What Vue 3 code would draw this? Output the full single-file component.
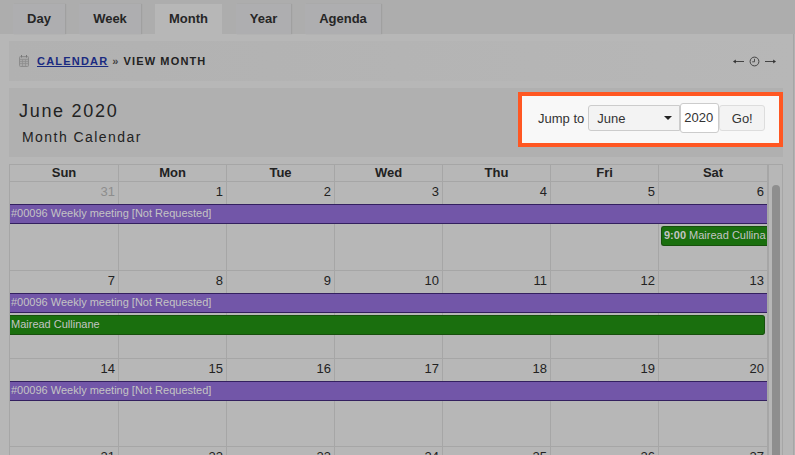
<script setup>
const tabs = [
  { label: 'Day', w: 52 },
  { label: 'Week', w: 62 },
  { label: 'Month', w: 67, active: true },
  { label: 'Year', w: 55 },
  { label: 'Agenda', w: 76 },
]
const heads = ['Sun', 'Mon', 'Tue', 'Wed', 'Thu', 'Fri', 'Sat']
const meeting = '#00096 Weekly meeting [Not Requested]'
const weeks = [
  { h: 89, days: [31, 1, 2, 3, 4, 5, 6], muted: 31, person: 'single' },
  { h: 88, days: [7, 8, 9, 10, 11, 12, 13], person: 'wide' },
  { h: 88, days: [14, 15, 16, 17, 18, 19, 20] },
  { h: 88, days: [21, 22, 23, 24, 25, 26, 27] },
]
</script>

<template>
  <div class="page">
    <nav class="tabs">
      <div
        v-for="t in tabs"
        :key="t.label"
        class="tab"
        :class="{ active: t.active }"
        :style="{ width: t.w + 'px' }"
      >{{ t.label }}</div>
    </nav>

    <div class="content">
      <section class="crumbs">
        <svg class="cal-icon" width="10" height="12" viewBox="0 0 10 12">
          <rect x="0.5" y="1.5" width="9" height="10" rx="1" fill="#a8a8a8" stroke="#8c8c8c" />
          <path d="M0.5 4.5H9.5M0.5 6.5H9.5M0.5 8.5H9.5M3.5 4.5V11.5M6.5 4.5V11.5" stroke="#8c8c8c" stroke-width="0.7" fill="none" />
          <path d="M2.5 0V2.5M7.5 0V2.5" stroke="#777" fill="none" />
        </svg>
        <a class="crumb-link">CALENDAR</a>
        <span class="crumb-sep">»</span>
        <span class="crumb-text">VIEW MONTH</span>
        <span class="pager">
          <svg width="11" height="7" viewBox="0 0 11 7">
            <path d="M2 3.5H11" fill="none" stroke="#444" stroke-width="1" />
            <path d="M0 3.5L2.8 1.5V5.5Z" fill="#333" />
          </svg>
          <svg width="11" height="11" viewBox="0 0 11 11">
            <circle cx="5.5" cy="5.5" r="4.4" fill="none" stroke="#444" stroke-width="1" />
            <path d="M5.5 2.8V5.8H3.2" fill="none" stroke="#444" stroke-width="0.9" />
          </svg>
          <svg width="11" height="7" viewBox="0 0 11 7">
            <path d="M0 3.5H9" fill="none" stroke="#444" stroke-width="1" />
            <path d="M11 3.5L8.2 1.5V5.5Z" fill="#333" />
          </svg>
        </span>
      </section>

      <section class="head">
        <div class="titles">
          <h1>June 2020</h1>
          <h2>Month Calendar</h2>
        </div>
        <form class="jump" @submit.prevent>
          <span class="jump-label">Jump to</span>
          <div class="select">
            <span>June</span>
            <i class="caret"></i>
          </div>
          <div class="year">2020</div>
          <button class="go" type="button">Go!</button>
        </form>
      </section>

      <section class="calendar">
        <div class="main">
          <div class="head-row">
            <div v-for="d in heads" :key="d" class="head-cell">{{ d }}</div>
          </div>
          <div
            v-for="w in weeks"
            :key="w.days[0]"
            class="week"
            :style="{ height: w.h + 'px' }"
          >
            <div
              v-for="(d, i) in w.days"
              :key="d"
              class="day"
              :style="{ gridColumn: i + 1 }"
            >
              <span :class="{ muted: d === w.muted }">{{ d }}</span>
            </div>
            <div class="ev purple">{{ meeting }}</div>
            <div v-if="w.person === 'wide'" class="ev green wide">Mairead Cullinane</div>
            <div v-if="w.person === 'single'" class="ev green single">
              <div class="clip"><b>9:00</b> Mairead Cullinane</div>
            </div>
          </div>
        </div>
        <div class="scroll"><div class="thumb"></div></div>
      </section>
    </div>
  </div>
</template>

<style>
html, body { margin: 0; padding: 0; overflow: hidden; background: #b7b7b7; }
</style>

<style scoped>
.page {
  width: 795px;
  height: 455px;
  overflow: hidden;
  background: #b3b3b3;
  font-family: "Liberation Sans", Arial, sans-serif;
  color: #222;
}
.tabs {
  display: flex;
  height: 34px;
  padding-top: 4px;
  padding-left: 13px;
  box-sizing: border-box;
  gap: 14px;
  background: #adadad;
}
.tab {
  box-sizing: border-box;
  height: 30px;
  background: #aeaeb0;
  box-shadow: 1px 0 1px #a0a0a0;
  font-size: 13px;
  font-weight: bold;
  line-height: 29px;
  text-align: center;
  color: #262626;
}
.tab.active { background: #b7b7b7; box-shadow: none; }
.content {
  box-sizing: border-box;
  width: 794px;
  height: 421px;
  padding: 7px 0 0 9px;
  background: #b7b7b7;
  border-right: 1px solid #a6a6a6;
}
.crumbs {
  display: flex;
  align-items: center;
  box-sizing: border-box;
  height: 40px;
  padding: 0 17px 0 10px;
  background: linear-gradient(to right, #b1b1b1, #b7b7b7);
  font-size: 11px;
  font-weight: bold;
  letter-spacing: 1.2px;
}
.cal-icon { margin-right: 8px; }
.crumb-link { color: #1a2a80; text-decoration: underline; }
.crumb-sep { margin: 0 5px 0 4px; color: #444; letter-spacing: 0; }
.crumb-text { color: #222; letter-spacing: 1.15px; }
.pager {
  margin-left: auto;
  display: flex;
  align-items: center;
  gap: 5px;
  letter-spacing: 0;
}
.head {
  display: flex;
  justify-content: space-between;
  box-sizing: border-box;
  width: 774px;
  height: 69px;
  margin-top: 7px;
  background: #b0b0b0;
  padding: 4px 0 0 10px;
}
h1 {
  margin: 9px 0 0;
  font-size: 18px;
  font-weight: normal;
  letter-spacing: 1.7px;
  line-height: 20px;
}
h2 {
  margin: 8px 0 0 3px;
  font-size: 14px;
  font-weight: normal;
  letter-spacing: 1.45px;
  line-height: 16px;
}
.jump {
  display: flex;
  align-items: center;
  box-sizing: border-box;
  width: 265px;
  height: 55px;
  padding: 0 0 3px 16px;
  background: #f8f8f8;
  border: 4px solid #ff5722;
  font-size: 13px;
  color: #333;
}
.jump-label { margin-right: 4px; }
.select {
  box-sizing: border-box;
  display: flex;
  align-items: center;
  justify-content: space-between;
  width: 92px;
  height: 26px;
  padding: 0 8px;
  background: #f3f3f3;
  border: 1px solid #ccc;
  border-radius: 3px 0 0 3px;
}
.caret {
  border-left: 4px solid transparent;
  border-right: 4px solid transparent;
  border-top: 4px solid #222;
  margin-right: -1px;
}
.year {
  box-sizing: border-box;
  width: 39px;
  height: 30px;
  line-height: 28px;
  padding-right: 2px;
  text-align: center;
  background: #fff;
  border: 1px solid #ccc;
  border-radius: 3px;
}
.go {
  box-sizing: border-box;
  width: 46px;
  height: 26px;
  padding: 0;
  font: inherit;
  color: #333;
  background: #f3f3f3;
  border: 1px solid #ddd;
  border-radius: 3px;
}
.calendar {
  display: flex;
  width: 774px;
  margin-top: 7px;
  border: 1px solid #a6a6a6;
  border-bottom: 0;
  box-sizing: border-box;
}
.main { width: 758px; flex: none; }
.head-row {
  display: grid;
  grid-template-columns: 109px 108px 108px 108px 108px 108px 109px;
  height: 16px;
  border-bottom: 1px solid #a6a6a6;
}
.head-cell {
  border-right: 1px solid #a6a6a6;
  font-size: 13px;
  font-weight: bold;
  line-height: 16px;
  text-align: center;
  color: #222;
}
.week {
  display: grid;
  grid-template-columns: 109px 108px 108px 108px 108px 108px 109px;
  grid-template-rows: 22px 20px 2px 21px 1fr;
  box-sizing: border-box;
  border-bottom: 1px solid #a6a6a6;
}
.day {
  grid-row: 1 / -1;
  border-right: 1px solid #a6a6a6;
  text-align: right;
  padding-right: 3px;
  font-size: 13px;
  line-height: 19px;
  color: #222;
}
.muted { color: #8d8d8d; }
.ev {
  box-sizing: border-box;
  font-size: 11px;
  white-space: nowrap;
  overflow: hidden;
  padding-left: 1px;
  color: #c4c4c4;
  z-index: 1;
}
.purple {
  grid-column: 1 / -1;
  grid-row: 2;
  line-height: 17px;
  background: #7256a8;
  border-top: 1px solid #33205f;
  border-bottom: 1px solid #33205f;
  margin-right: 1px;
}
.green {
  grid-row: 4;
  height: 20px;
  line-height: 17px;
  background: #1a6f0e;
  border: 1px solid #17500d;
}
.wide {
  grid-column: 1 / -1;
  margin-right: 3px;
  border-left: 0;
  border-radius: 0 3px 3px 0;
}
.single {
  grid-column: 7;
  margin: 0 1px 0 2px;
  padding: 0 1px 0 2px;
  border-right: 0;
  border-radius: 3px 0 0 3px;
}
.clip { overflow: hidden; }
.scroll {
  box-sizing: border-box;
  flex: 1;
  border-left: 1px solid #a6a6a6;
  padding: 20px 3px 0 3px;
}
.thumb {
  width: 8px;
  height: 300px;
  background: #8e8e8e;
  border-radius: 4px 4px 0 0;
}
</style>
